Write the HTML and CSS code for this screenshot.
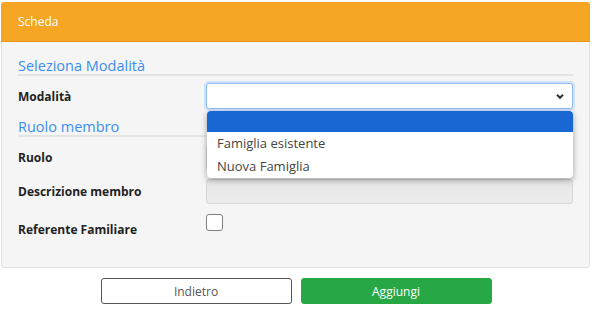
FILE: index.html
```html
<!DOCTYPE html>
<html lang="it">
<head>
    <meta charset="UTF-8">
    <meta name="viewport" content="width=device-width, initial-scale=1.0">
    <title>Scheda</title>
    <link rel="stylesheet" href="styles.css">
</head>
<body>
    <div class="page">
        <div class="card">
            <div class="card-header">Scheda</div>
            <div class="card-body">
                <h2 class="section-title">Seleziona Modalità</h2>
                <div class="form-row">
                    <label class="form-label">Modalità</label>
                    <div class="select-wrap">
                        <div class="select-box">
                            <svg class="chevron" width="10" height="7" viewBox="0 0 10 7">
                                <path d="M2 1.8 L5 4.8 L8 1.8" fill="none" stroke="#333" stroke-width="2"/>
                            </svg>
                        </div>
                        <ul class="dropdown">
                            <li class="option selected"></li>
                            <li class="option">Famiglia esistente</li>
                            <li class="option">Nuova Famiglia</li>
                        </ul>
                    </div>
                </div>

                <h2 class="section-title">Ruolo membro</h2>
                <div class="form-row">
                    <label class="form-label">Ruolo</label>
                    <div class="input-box"></div>
                </div>
                <div class="form-row">
                    <label class="form-label">Descrizione membro</label>
                    <div class="input-box disabled"></div>
                </div>
                <div class="form-row check-row">
                    <label class="form-label">Referente Familiare</label>
                    <div><span class="checkbox"></span></div>
                </div>
            </div>
        </div>

        <div class="actions">
            <button class="btn btn-back">Indietro</button>
            <button class="btn btn-add">Aggiungi</button>
        </div>
    </div>
</body>
</html>
```

FILE: styles.css
```css
* {
    margin: 0;
    padding: 0;
    box-sizing: border-box;
    font-family: 'Open Sans', 'Liberation Sans', sans-serif;
}

body {
    background: #ffffff;
}

.page {
    padding: 2px 2px 0 1px;
}

.card {
    border: 1px solid #e2e2e2;
    border-radius: 3px;
    background: #f5f5f5;
}

.card-header {
    height: 40px;
    margin: -1px -1px 0 -1px;
    padding: 0 17px;
    background: #f5a623;
    border-bottom: 1px solid #e6981c;
    border-radius: 3px 3px 0 0;
    color: #ffffff;
    font-size: 12px;
    line-height: 40px;
}

.card-body {
    padding: 15px 16px 26px 16px;
}

.section-title {
    font-size: 14.5px;
    font-weight: 400;
    line-height: 17px;
    color: #3a8ef0;
    border-bottom: 2px solid #e3e3e3;
}

.form-row {
    display: grid;
    grid-template-columns: 188px 1fr;
    align-items: center;
    margin-top: 9px;
}

.section-title + .form-row {
    margin-top: 7px;
}

.form-row + .section-title {
    margin-top: 9px;
}

.form-label {
    font-size: 12px;
    font-weight: 700;
    color: #222222;
}

.select-wrap {
    position: relative;
}

.select-box {
    height: 26px;
    background: #ffffff;
    border: 1px solid #8fbcf5;
    border-radius: 3px;
    box-shadow: 0 0 0 2px #cfe2fc;
    display: flex;
    align-items: center;
    justify-content: flex-end;
    padding-right: 7px;
}

.dropdown {
    position: absolute;
    top: 28px;
    left: 1px;
    right: 0;
    list-style: none;
    background: #ffffff;
    border-radius: 4px;
    box-shadow: 0 2px 6px rgba(0, 0, 0, 0.35);
    overflow: hidden;
    z-index: 5;
}

.option {
    height: 23px;
    line-height: 23px;
    padding-left: 10px;
    font-size: 13px;
    color: #444444;
}

.option.selected {
    height: 21px;
    background: #1967d2;
}

.input-box {
    height: 26px;
    background: #ffffff;
    border: 1px solid #d4d4d4;
    border-radius: 3px;
}

.input-box.disabled {
    height: 25px;
    background: linear-gradient(#e6e6e6, #ececec);
    border-color: #d6d6d6;
}

.check-row {
    align-items: start;
    height: 27px;
    margin-top: 10px;
}

.check-row .form-label {
    line-height: 27px;
    padding-top: 2px;
}

.checkbox {
    display: block;
    width: 17px;
    height: 17px;
    background: #ffffff;
    border: 1px solid #808080;
    border-radius: 3px;
}

.actions {
    display: flex;
    justify-content: center;
    gap: 9px;
    margin-top: 10px;
    padding-left: 1px;
}

.btn {
    width: 191px;
    height: 26px;
    border-radius: 3px;
    font-size: 12px;
    cursor: pointer;
}

.btn-back {
    background: #ffffff;
    border: 1px solid #555555;
    color: #555555;
}

.btn-add {
    background: #28a745;
    border: 1px solid #28a745;
    color: #ffffff;
}
```
